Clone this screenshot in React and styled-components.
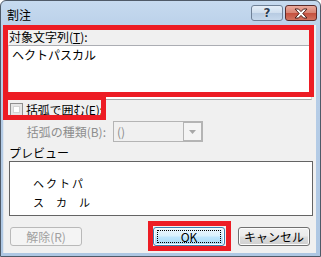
import React from "react";
import styled, { createGlobalStyle } from "styled-components";

const GlobalStyle = createGlobalStyle`
  html, body { margin: 0; padding: 0; background: #ffffff; }
  body { font-family: "Noto Sans CJK JP", "Noto Sans", sans-serif; }
`;

export default function App() {
  return (
    <>
      <GlobalStyle />
      <Window>
        <TitleBar>
          <Title>割注</Title>
          <Caption>
            <HelpButton>?</HelpButton>
            <CloseButton>
              <svg width="14" height="11" viewBox="0 0 14 11">
                <path
                  d="M1 1h3.5L7 3.6 9.5 1H13L8.8 5.5 13 10H9.5L7 7.4 4.5 10H1l4.2-4.5z"
                  fill="#ffffff"
                  stroke="#4a1f1a"
                  strokeWidth="1"
                  strokeLinejoin="round"
                />
              </svg>
            </CloseButton>
          </Caption>
        </TitleBar>

        <Body>
          <Label $top={5}>
            対象文字列(<u>T</u>):
          </Label>
          <TextArea>ヘクトパスカル</TextArea>

          <CheckRow>
            <CheckBox />
            <CheckText>
              括弧で囲む(<u>E</u>):
            </CheckText>
          </CheckRow>

          <KindRow>
            <KindLabel>括弧の種類(B):</KindLabel>
            <Combo>
              <ComboText>()</ComboText>
              <ComboArrow>
                <svg width="7" height="4" viewBox="0 0 7 4">
                  <path d="M0 0h7L3.5 4z" fill="#a8a8a8" />
                </svg>
              </ComboArrow>
            </Combo>
          </KindRow>

          <Label $top={4}>プレビュー</Label>
          <Preview>
            <PreviewLine $spacing={2}>ヘクトパ</PreviewLine>
            <PreviewLine $spacing={12}>スカル</PreviewLine>
          </Preview>

          <ButtonRow>
            <Button disabled>解除(R)</Button>
            <Spacer />
            <Button $primary>
              <Focus>OK</Focus>
            </Button>
            <Button>キャンセル</Button>
          </ButtonRow>

          <Highlight $x={0} $y={0} $w={311} $h={72} />
          <Highlight $x={0} $y={70} $w={103} $h={25} />
          <Highlight $x={145} $y={196} $w={83} $h={30} />
        </Body>
      </Window>
    </>
  );
}

//#region STYLED COMPONENTS
const Window = styled.div`
  width: 321px;
  height: 257px;
  box-sizing: border-box;
  border: 1px solid #4f5a68;
  border-radius: 6px 6px 0 0;
  background: linear-gradient(180deg, #c6daef 0%, #b9cfe8 12%, #aec7e3 100%);
  display: flex;
  flex-direction: column;
  padding: 0 4px 3px 2px;
  overflow: hidden;
`;

const TitleBar = styled.div`
  height: 24px;
  display: flex;
  align-items: flex-start;
  justify-content: space-between;
  margin-right: -1px;
`;

const Title = styled.div`
  font-size: 12px;
  line-height: 16px;
  color: #000;
  padding: 6px 0 0 4px;
`;

const Caption = styled.div`
  display: flex;
  gap: 2px;
  padding-top: 4px;
`;

const CapButton = styled.div`
  height: 16px;
  box-sizing: border-box;
  border-radius: 3px;
  display: flex;
  align-items: center;
  justify-content: center;
`;

const HelpButton = styled(CapButton)`
  width: 32px;
  border: 1px solid #6f8197;
  background: linear-gradient(180deg, #e4eef8 0%, #cfdeee 48%, #b7cbe2 52%, #c6d8ec 100%);
  font-family: "DejaVu Sans", sans-serif;
  font-weight: bold;
  font-size: 12px;
  color: #2b3c52;
  text-shadow: 0 0 1px #fff, 0 0 1px #fff;
`;

const CloseButton = styled(CapButton)`
  width: 32px;
  border: 1px solid #5a2b2b;
  background: linear-gradient(180deg, #e9a99c 0%, #d98574 48%, #c5503e 52%, #d27360 100%);
`;

const Body = styled.div`
  position: relative;
  flex: 1;
  background: #f0f0f0;
  box-shadow: inset 1px 0 0 #dfe6ee;
  display: flex;
  flex-direction: column;
  font-size: 12px;
  color: #000;
`;

const Label = styled.div`
  font-size: 12px;
  line-height: 14px;
  margin: ${(p) => p.$top ?? 4}px 0 0 6px;
  u { text-decoration-thickness: 1px; text-underline-offset: 1px; }
`;

const TextArea = styled.div`
  margin: 1px 0 0 5px;
  width: 304px;
  height: 55px;
  box-sizing: border-box;
  background: #fff;
  border: 1px solid #dadada;
  border-top-color: #abadb3;
  border-bottom-color: #a8a8a8;
  padding: 2px 3px;
  font-size: 12px;
  line-height: 14px;
`;

const CheckRow = styled.div`
  display: flex;
  align-items: center;
  gap: 3px;
  margin: 2px 0 0 7px;
  height: 15px;
  line-height: 14px;
`;

const CheckText = styled.span`
  letter-spacing: -0.2px;
  u { text-decoration-thickness: 1px; text-underline-offset: 1px; }
`;

const CheckBox = styled.div`
  width: 13px;
  height: 13px;
  box-sizing: border-box;
  border: 1px solid #8f8f8f;
  background: #fff;
  box-shadow: inset 0 0 0 2px #e6e6e6, inset 0 0 0 3px #d4d4d4;
`;

const KindRow = styled.div`
  display: flex;
  align-items: center;
  margin: 4px 0 0 0;
  height: 21px;
`;

const KindLabel = styled.div`
  width: 110px;
  text-align: right;
  padding-right: 7px;
  box-sizing: border-box;
  color: #8d8d8d;
`;

const Combo = styled.div`
  width: 90px;
  height: 21px;
  box-sizing: border-box;
  border: 1px solid #b4b4b4;
  background: #f0f0f0;
  display: flex;
  align-items: stretch;
`;

const ComboText = styled.div`
  flex: 1;
  padding-left: 3px;
  line-height: 19px;
  color: #8d8d8d;
`;

const ComboArrow = styled.div`
  width: 17px;
  border: 1px solid #b4b4b4;
  background: #f4f4f4;
  display: flex;
  align-items: center;
  justify-content: center;
`;

const Preview = styled.div`
  margin: 1px 0 0 6px;
  width: 304px;
  height: 55px;
  box-sizing: border-box;
  background: #fff;
  border: 1px solid #646464;
  padding: 12px 0 0 23px;
`;

const PreviewLine = styled.div`
  font-size: 11px;
  line-height: 19px;
  letter-spacing: ${(p) => p.$spacing}px;
`;

const ButtonRow = styled.div`
  display: flex;
  align-items: center;
  margin: 11px 0 0 7px;
  padding-right: 6px;
  gap: 13px;
`;

const Spacer = styled.div`
  flex: 1;
`;

const Button = styled.div`
  width: 72px;
  height: 19px;
  box-sizing: border-box;
  border-radius: 3px;
  display: flex;
  align-items: center;
  justify-content: center;
  font-size: 12px;
  border: 1px solid ${(p) => (p.disabled ? "#b9b9b9" : p.$primary ? "#3c7fb1" : "#707070")};
  color: ${(p) => (p.disabled ? "#a0a0a0" : "#000")};
  background: ${(p) =>
    p.disabled
      ? "#f4f4f4"
      : p.$primary
      ? "linear-gradient(180deg, #eaf6fd 0%, #d9f0fc 48%, #bee6fd 52%, #a7d9f5 100%)"
      : "linear-gradient(180deg, #f2f2f2 0%, #ebebeb 48%, #dddddd 52%, #cfcfcf 100%)"};
  box-shadow: inset 0 0 0 1px ${(p) => (p.disabled ? "#f4f4f4" : "#fcfcfc")};
`;

const Focus = styled.span`
  display: flex;
  align-items: center;
  justify-content: center;
  width: 64px;
  height: 13px;
  border: 1px dotted #000;
  box-sizing: border-box;
  line-height: 11px;
`;

const Highlight = styled.div`
  position: absolute;
  left: ${(p) => p.$x}px;
  top: ${(p) => p.$y}px;
  width: ${(p) => p.$w}px;
  height: ${(p) => p.$h}px;
  box-sizing: border-box;
  border: 5px solid #ed1c24;
  pointer-events: none;
`;
//#endregion
